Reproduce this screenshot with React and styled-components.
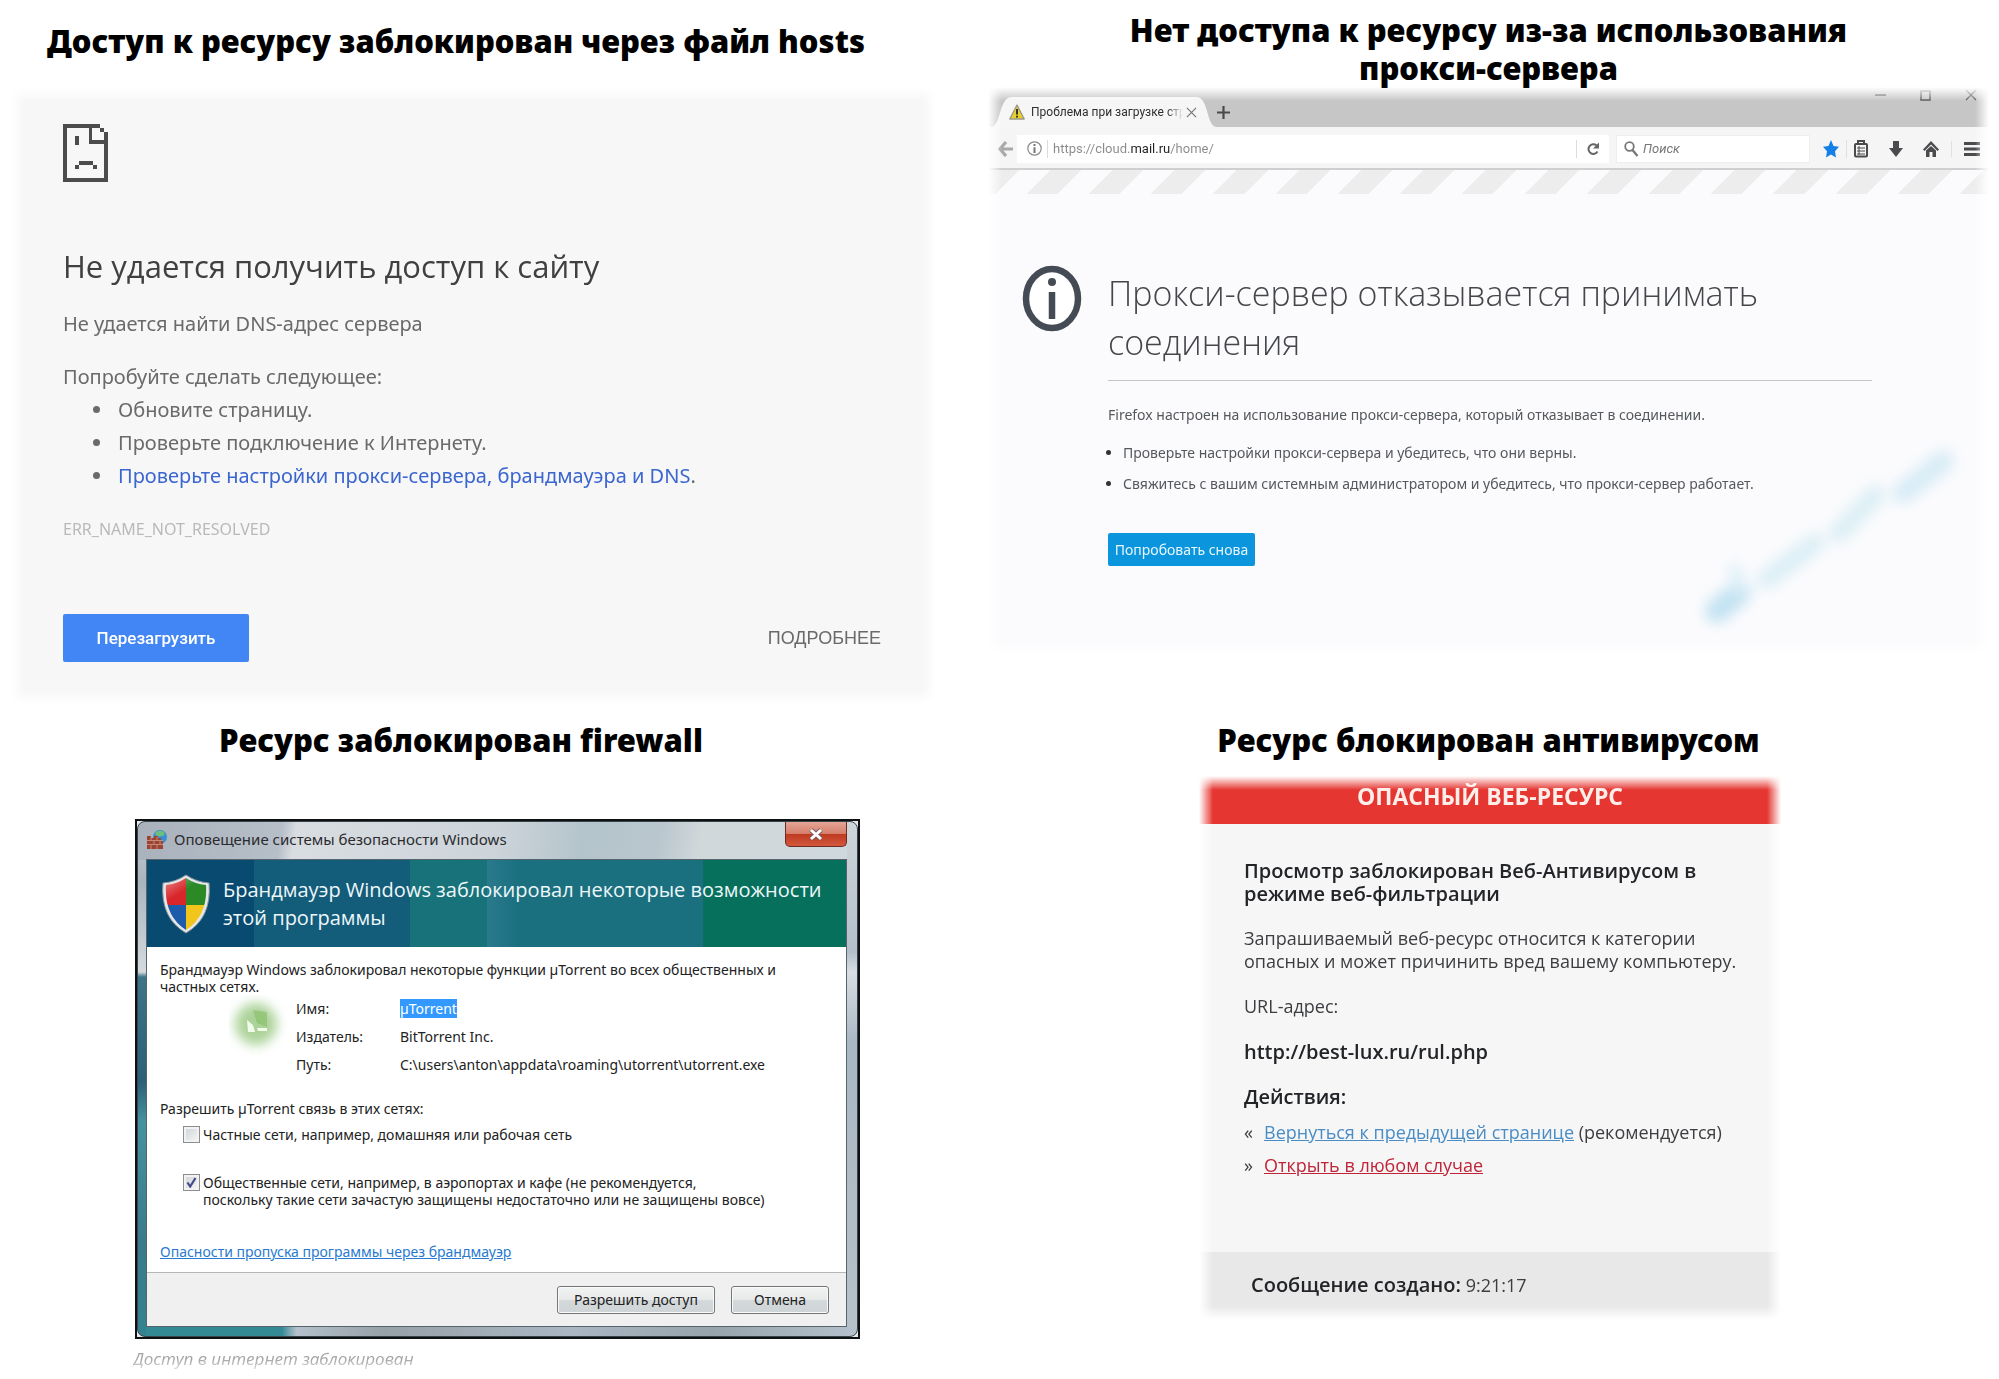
import React from 'react';
import styled, { createGlobalStyle, css } from 'styled-components';

const GlobalStyle = createGlobalStyle`
  *, *::before, *::after {
    box-sizing: border-box;
  }

  body {
    background: #fff;
    font-family: "Noto Sans", "Open Sans", sans-serif;
    margin: 0;
  }

  h1, h2, h3, p, ul, dl, dd {
    margin: 0;
    padding: 0;
  }
`;

// soft edges shared by the pasted-in cards
const feather = css`
  mask-image:
    linear-gradient(to right, transparent, #000 14px, #000 calc(100% - 14px), transparent),
    linear-gradient(to bottom, transparent, #000 14px, #000 calc(100% - 14px), transparent);
  mask-composite: intersect;
`;

const Board = styled.main`
  display: grid;
  grid-template-columns: minmax(0, 926fr) minmax(0, 1001fr);
  column-gap: 52px;
  row-gap: 17px;
  align-items: start;
  padding: 0 10px;
`;

const Heading = styled.h2`
  color: #000;
  font-size: 31px;
  font-weight: 900;
  line-height: 38px;
  padding: ${(props) => props.$pad};
  text-align: center;
`;

/* Chrome error page */

const ChromePage = styled.div`
  ${feather}
  background: #f7f7f8;
  color: #6a6a6a;
  font-size: 20px;
  line-height: 33px;
  padding: 37px 55px 42px 53px;

  svg {
    display: block;
  }
`;

const ChromeTitle = styled.h3`
  color: #404040;
  font-family: "Open Sans", sans-serif;
  font-size: 31px;
  font-weight: 400;
  line-height: 42px;
  margin: 63px 0 20px;
`;

const Tips = styled.ul`
  padding-left: 51px;

  li {
    padding-left: 4px;
  }

  a {
    color: #3b66cf;
    text-decoration: none;
  }
`;

const Suggest = styled.p`
  margin-top: 20px;
`;

const ErrorCode = styled.div`
  color: #b9b9b9;
  font-size: 16px;
  line-height: 24px;
  margin: 25px 0 73px;
`;

const ChromeActions = styled.div`
  align-items: center;
  display: flex;
  justify-content: space-between;
`;

const ReloadButton = styled.button`
  background: #4285f4;
  border: 0;
  border-radius: 2px;
  color: #fff;
  font: 500 17px/48px Roboto, sans-serif;
  padding: 0;
  width: 186px;
`;

const DetailsButton = styled.button`
  background: none;
  border: 0;
  color: #6a6a6a;
  font: 18px/24px "Liberation Sans", sans-serif;
  padding: 0;
`;

/* Firefox window */

const FirefoxWindow = styled.div`
  ${feather}
  background: #fbfbfd;
  color: #55585c;
  font-size: 14px;
  position: relative;
`;

const TabStrip = styled.div`
  background: #c6c6c6;
  display: flex;
  height: 40px;
  padding-left: 4px;
`;

const Tab = styled.div`
  align-items: center;
  align-self: flex-end;
  background: #f6f6f6;
  clip-path: path("M0 30 C9 28 7 0 20 0 H204 C217 0 214 28 224 30 Z");
  color: #2f2f2f;
  display: flex;
  font: 12px/30px Roboto, sans-serif;
  height: 30px;
  padding-left: 17px;
  width: 224px;
`;

const TabLabel = styled.span`
  flex: none;
  mask-image: linear-gradient(to right, #000 136px, transparent 152px);
  margin: 0 0 0 6px;
  white-space: nowrap;
`;

const BareButton = styled.button`
  align-items: center;
  background: none;
  border: 0;
  color: inherit;
  display: flex;
  flex: none;
  justify-content: center;
  padding: 0;
`;

const CloseTab = styled(BareButton)`
  color: #777;
`;

const NewTab = styled(BareButton)`
  align-self: flex-end;
  color: #4a4a4a;
  height: 30px;
  width: 14px;
`;

const WindowControls = styled.div`
  color: #555;
  display: flex;
  gap: 34px;
  height: 16px;
  margin-left: auto;
  padding-right: 12px;
`;

const Toolbar = styled.div`
  align-items: center;
  background: #f5f5f6;
  border-bottom: 2px solid #cfcfd0;
  display: flex;
  height: 43px;
  padding: 2px 0 0 10px;
`;

const Field = styled.label`
  align-items: center;
  background: #fff;
  display: flex;
  height: 28px;
`;

const UrlField = styled(Field)`
  flex: 1;
  margin: 0 7px 0 3px;
  padding-left: 10px;
`;

const SearchField = styled(Field)`
  border: 1px solid #eee;
  flex: none;
  gap: 4px;
  padding-left: 7px;
  width: 194px;
`;

const Divider = styled.span`
  background: #dcdcdc;
  height: 18px;
  margin-left: ${(props) => props.$gap}px;
  width: 1px;
`;

const UrlInput = styled.input`
  background: linear-gradient(to right, #8a8a8a 82px, #222 82px, #222 122px, #8a8a8a 122px);
  background-clip: text;
  border: 0;
  color: transparent;
  flex: 1;
  font: 13px/20px Roboto, sans-serif;
  min-width: 0;
  outline: 0;
  padding: 0 0 0 5px;
`;

const SearchInput = styled.input`
  background: none;
  border: 0;
  flex: 1;
  font: italic 13px/20px Roboto, sans-serif;
  min-width: 0;
  outline: 0;
  padding: 0;

  &::placeholder {
    color: #777;
  }
`;

const ReloadIcon = styled(BareButton)`
  color: #666;
  width: 32px;
`;

const Tools = styled.div`
  border-left: ${(props) => (props.$line ? '1px solid #e0e0e2' : '0')};
  color: #4b4b4d;
  display: flex;
  flex: none;
  gap: 19px;
  padding: ${(props) => props.$pad};
`;

const Stripes = styled.div`
  background: repeating-linear-gradient(
    135deg,
    #ededee 0,
    #ededee 22px,
    #fbfbfd 22px,
    #fbfbfd 44px
  );
  height: 24px;
`;

const ProxyPage = styled.div`
  align-items: flex-start;
  display: flex;
  gap: 26px;
  padding: 71px 117px 89px 34px;

  > svg {
    flex: none;
  }
`;

const ProxyText = styled.div`
  flex: 1;
  line-height: 31px;
  padding-top: 4px;

  ul {
    margin: 7px 0 34px;
    padding-left: 15px;
  }

  li::marker {
    color: #333;
  }
`;

const ProxyTitle = styled.h3`
  border-bottom: 1px solid #c4c4c6;
  color: #44464a;
  font-family: "Open Sans", sans-serif;
  font-size: 34px;
  font-weight: 300;
  line-height: 49px;
  margin-bottom: 18px;
  padding-bottom: 13px;
`;

const RetryButton = styled.button`
  background: #0a95dd;
  border: 0;
  border-radius: 2px;
  color: #e8f6ff;
  display: block;
  font: 14px/33px "Noto Sans", sans-serif;
  padding: 0;
  width: 147px;
`;

const Smudge = styled.svg`
  bottom: 12px;
  position: absolute;
  right: 14px;
`;

/* Windows firewall dialog */

const FirewallWindow = styled.div`
  background: #e4e8ea;
  border: 2px solid #0e1112;
  margin-left: 125px;
  max-width: 725px;
`;

const Glass = styled.div`
  background:
    linear-gradient(to bottom, transparent 37px, #a9b5be 60px, #d5dade 150px, #3c7488 155px, #2b6079 260px, #4593a0 300px, #3a7a8c 420px, #338391) left / 8px 100% no-repeat,
    linear-gradient(to right, #338a94 20%, #b4c0cb 22%, #96a1a8 34%, #aab6c2 60%, #98a4ac 80%, #b4c0cb) bottom / 100% 9px no-repeat,
    linear-gradient(to bottom, #cfd6da, #b3bfca 130px, #d8dee2 150px, #a9b7c4 220px, #b6c2c8) right / 10px 100% no-repeat,
    linear-gradient(100deg, #a9b2bc 0, #b6bec8 20%, #d9dde1 22%, #ccd4da 50%, #b4c4cb 62%, #b9c6ce 72%, #d0d8da 78%, #cfd8dc) top / 100% 38px no-repeat,
    #b6bec8;
  border: 1px solid #39434a;
  border-radius: 8px;
  padding: 0 10px 9px 8px;
`;

const TitleBar = styled.div`
  align-items: center;
  color: #2b2b2e;
  display: flex;
  font-size: 15px;
  gap: 6px;
  height: 37px;
  line-height: 20px;
  padding: 0 0 3px 1px;
`;

const CloseButton = styled(BareButton)`
  align-self: flex-start;
  background: linear-gradient(to bottom, #e3a596, #d6806c 48%, #bf3a22 52%, #d2583c);
  border: 1px solid #6b2a22;
  border-radius: 0 0 5px 5px;
  border-top: 0;
  height: 25px;
  margin-left: auto;
  width: 62px;
`;

const DialogBody = styled.div`
  background: #fff;
  border: 1px solid #56646c;
  color: #222;
  font-size: 14px;
  line-height: 17px;
`;

const Banner = styled.div`
  align-items: center;
  background: linear-gradient(
    to right,
    #084a70 107px,
    #135c7a 107px,
    #135c7a 263px,
    #17727a 263px,
    #17727a 340px,
    #2a7a8c 340px,
    #1b7080 370px,
    #1b7080 556px,
    #07705d 556px
  );
  color: #eef7f9;
  display: flex;
  gap: 12px;
  height: 87px;
  padding-left: 14px;

  h3 {
    font: 400 20px/28px "Open Sans", sans-serif;
  }

  svg {
    flex: none;
  }
`;

const DialogContent = styled.div`
  padding: 14px 13px 12px;
`;

const Summary = styled.p`
  max-width: 640px;
`;

const AppInfo = styled.div`
  display: grid;
  grid-template-columns: 67px 1fr;
  padding-left: 69px;

  dl {
    display: grid;
    grid-template-columns: 104px 1fr;
    line-height: 28px;
  }
`;

const Selected = styled.mark`
  background: #3399ff;
  color: #fff;
`;

const Networks = styled.fieldset`
  border: 0;
  margin: 21px 0 35px;
  padding: 0;

  legend {
    padding: 0;
  }
`;

const CheckRow = styled.label`
  display: flex;
  gap: 3px;
  margin: ${(props) => props.$top}px 0 0 23px;
`;

const CheckBox = styled.input`
  appearance: none;
  background: linear-gradient(135deg, #cdd3d6, #f7f7f7);
  border: 1px solid #8b8f92;
  box-shadow: inset 0 0 0 2px #f2f2f2;
  flex: none;
  height: 17px;
  margin: 0;
  width: 17px;

  &:checked {
    background: url("data:image/svg+xml,%3Csvg xmlns='http://www.w3.org/2000/svg' viewBox='0 0 15 15'%3E%3Cpath d='M3.500 7.500 6.200 11.500 11.500 3' fill='none' stroke='%23434a8a' stroke-width='2.200'/%3E%3C/svg%3E") center / 15px no-repeat, linear-gradient(135deg, #cdd3d6, #f7f7f7);
  }
`;

const HelpLink = styled.a`
  color: #2a7ad0;
`;

const DialogFooter = styled.div`
  background: #f0f0f1;
  border-top: 1px solid #b8b5b8;
  display: flex;
  gap: 16px;
  justify-content: flex-end;
  padding: 13px 17px 12px 0;
`;

const DialogButton = styled.button`
  background: linear-gradient(to bottom, #f1f2f2, #e8eaea 48%, #d3d9da 52%, #cfd4d6);
  border: 1px solid #74787a;
  border-radius: 3px;
  box-shadow: inset 0 0 0 1px #fafafa;
  color: #222;
  font: 14px/26px "Noto Sans", sans-serif;
  padding: 0;
  width: ${(props) => (props.$wide ? 158 : 98)}px;
`;

const Caption = styled.p`
  color: #a4a4a4;
  font: italic 17px/24px "Open Sans", sans-serif;
  margin: 8px 0 0 123px;
  mask-image: linear-gradient(to bottom, #000 12px, rgba(0, 0, 0, 0.3));
`;

/* Antivirus warning */

const VirusCard = styled.div`
  ${feather}
  background: #f6f6f6;
  color: #3c3d40;
  font: 18px/23px "Open Sans", sans-serif;
  margin-left: 211px;
  max-width: 582px;
`;

const VirusHeader = styled.h3`
  background: #e53631;
  color: #fdeeea;
  font: 700 23px/30px "Open Sans", sans-serif;
  height: 48px;
  padding: 5px 0 0;
  text-align: center;
`;

const VirusBody = styled.div`
  display: flex;
  flex-direction: column;
  gap: 22px;
  padding: 35px 36px 70px 45px;
`;

const Strong = styled.strong`
  color: #222428;
  font-size: 20px;
  font-weight: 600;
`;

const Actions = styled.div`
  line-height: 33px;

  ${Strong} {
    display: block;
    line-height: 23px;
    margin-bottom: 8px;
  }
`;

const Action = styled.div`
  display: grid;
  grid-template-columns: 20px 1fr;
  white-space: nowrap;
`;

const ActionLink = styled.a`
  color: ${(props) => (props.$danger ? '#bf2438' : '#4a8cc4')};
`;

const VirusFooter = styled.div`
  background: #e8e8e8;
  height: 68px;
  padding: 21px 52px 0;
`;

const SadPage = () => (
  <svg width="45" height="58" viewBox="0 0 45 58" fill="#4c4c4c" aria-hidden="true">
    <path d="M0 0H37V4H41V8H45V58H0ZM4 4V54H41V20H26V4ZM29 4V16H41V8H37V4Z" fillRule="evenodd" />
    <path d="M12 12H16V21H12ZM16 37H30V41H16ZM12 41H16V45H12ZM30 41H34V45H30Z" />
  </svg>
);

const Warning = () => (
  <svg width="16" height="16" viewBox="0 0 16 16" aria-hidden="true">
    <path d="M8 1 15.200 15H.8Z" fill="#e8cf2a" stroke="#9a9a8a" strokeWidth="1.400" strokeLinejoin="round" />
    <path d="M8 5V10.500M8 11.800V13.500" stroke="#333" strokeWidth="2" />
  </svg>
);

const Cross = ({ size }) => (
  <svg width={size} height={size} viewBox="0 0 12 12" aria-hidden="true">
    <path d="M1 1 11 11M11 1 1 11" stroke="currentColor" strokeWidth="1.300" />
  </svg>
);

const InfoCircle = () => (
  <svg width="60" height="67" viewBox="0 0 60 67" aria-hidden="true">
    <ellipse cx="30" cy="33.500" rx="26" ry="29.500" fill="#fff" stroke="#444b54" strokeWidth="6.500" />
    <circle cx="30" cy="17" r="4" fill="#444b54" />
    <path d="M30 27V54" stroke="#444b54" strokeWidth="6.500" />
  </svg>
);

const FirewallIcon = () => (
  <svg width="21" height="21" viewBox="0 0 21 21" aria-hidden="true">
    <circle cx="13" cy="8" r="7" fill="#3a8fd0" />
    <path d="M8 4Q12 0 17 3 19 7 14 7 10 9 8 4Z" fill="#6cc07a" />
    <path d="M0 7H4V9H7V7H11V9H14V12H16V20H0Z" fill="#9c4434" />
    <path d="M0 11.500H16M0 15.500H16M4 8V11M10 8V11M7 12V15M13 12V15M4 16V20M10 16V20" stroke="#d09a8a" strokeWidth=".8" />
  </svg>
);

const Shield = () => (
  <svg width="50" height="60" viewBox="0 0 50 60" aria-hidden="true">
    <defs>
      <clipPath id="shield">
        <path d="M25 4Q34 10 45 11 47 42 25 56 3 42 5 11 16 10 25 4Z" />
      </clipPath>
      <linearGradient id="gloss" x1="0" y1="0" x2="1" y2="1">
        <stop offset="0" stopColor="#fff" stopOpacity=".55" />
        <stop offset=".5" stopColor="#fff" stopOpacity="0" />
      </linearGradient>
    </defs>
    <path d="M25 1Q35 8 48 9 51 44 25 59-1 44 2 9 15 8 25 1Z" fill="#e4e8ea" stroke="#8e979c" />
    <g clipPath="url(#shield)">
      <path d="M0 0H25V31H0Z" fill="#d8262a" />
      <path d="M25 0H50V31H25Z" fill="#2b8a26" />
      <path d="M0 31H25V60H0Z" fill="#1d5cab" />
      <path d="M25 31H50V60H25Z" fill="#f2c51d" />
      <path d="M0 0H50V31H0Z" fill="url(#gloss)" />
    </g>
  </svg>
);

const AppBlob = () => (
  <svg width="64" height="64" viewBox="0 0 64 64" aria-hidden="true">
    <defs>
      <filter id="soft" x="-40%" y="-40%" width="180%" height="180%">
        <feGaussianBlur stdDeviation="6" />
      </filter>
    </defs>
    <ellipse cx="27" cy="29" rx="21" ry="21" fill="#abd298" filter="url(#soft)" />
    <path d="M24 15 38 17 38 32 28 28Z" fill="#7dba5c" opacity=".5" />
    <path d="M18 25 24 30 26 37H19ZM28 33 38 33V36H29Z" fill="#f2faec" />
  </svg>
);

const ErrorHosts = () => (
  <section>
    <Heading $pad="22px 34px 27px 0">Доступ к ресурсу заблокирован через файл hosts</Heading>
    <ChromePage>
      <SadPage />
      <ChromeTitle>Не удается получить доступ к сайту</ChromeTitle>
      <p>Не удается найти DNS-адрес сервера</p>
      <Suggest>Попробуйте сделать следующее:</Suggest>
      <Tips>
        <li>Обновите страницу.</li>
        <li>Проверьте подключение к Интернету.</li>
        <li>
          <a href="#dns">Проверьте настройки прокси-сервера, брандмауэра и DNS</a>
          .
        </li>
      </Tips>
      <ErrorCode>ERR_NAME_NOT_RESOLVED</ErrorCode>
      <ChromeActions>
        <ReloadButton>Перезагрузить</ReloadButton>
        <DetailsButton>ПОДРОБНЕЕ</DetailsButton>
      </ChromeActions>
    </ChromePage>
  </section>
);

const ErrorProxy = () => (
  <section>
    <Heading $pad="11px 120px 0">Нет доступа к ресурсу из-за использования прокси-сервера</Heading>
    <FirefoxWindow>
      <TabStrip>
        <Tab>
          <Warning />
          <TabLabel>Проблема при загрузке стр</TabLabel>
          <CloseTab aria-label="Закрыть вкладку"><Cross size={11} /></CloseTab>
        </Tab>
        <NewTab aria-label="Новая вкладка">
          <svg width="13" height="13" viewBox="0 0 13 13">
            <path d="M6.500 0V13M0 6.500H13" stroke="currentColor" strokeWidth="2.200" />
          </svg>
        </NewTab>
        <WindowControls>
          <BareButton aria-label="Свернуть">
            <svg width="11" height="11" viewBox="0 0 11 11"><path d="M0 5H11" stroke="currentColor" strokeWidth="1.500" /></svg>
          </BareButton>
          <BareButton aria-label="Развернуть">
            <svg width="11" height="11" viewBox="0 0 11 11"><path d="M1 1H10V10H1Z" fill="none" stroke="currentColor" strokeWidth="1.500" /></svg>
          </BareButton>
          <BareButton aria-label="Закрыть"><Cross size={12} /></BareButton>
        </WindowControls>
      </TabStrip>
      <Toolbar>
        <BareButton aria-label="Назад">
          <svg width="16" height="16" viewBox="0 0 16 16"><path d="M8 1 2 8 8 15M2.500 8H15" fill="none" stroke="#a9a9a9" strokeWidth="3.200" /></svg>
        </BareButton>
        <UrlField>
          <svg width="15" height="15" viewBox="0 0 15 15" aria-hidden="true">
            <circle cx="7.500" cy="7.500" r="6.700" fill="none" stroke="#8a8a8a" strokeWidth="1.200" />
            <path d="M7.500 3V5M7.500 6.300V12" stroke="#777" strokeWidth="2" />
          </svg>
          <Divider $gap={5} />
          <UrlInput aria-label="Адрес" defaultValue="https://cloud.mail.ru/home/" />
          <Divider $gap={0} />
          <ReloadIcon aria-label="Обновить">
            <svg width="13" height="14" viewBox="0 0 13 14">
              <path d="M10.500 9.500A4.800 4.800 0 1 1 9.500 3.500" fill="none" stroke="currentColor" strokeWidth="2" />
              <path d="M12 .5V6.500H6Z" fill="currentColor" />
            </svg>
          </ReloadIcon>
        </UrlField>
        <SearchField>
          <svg width="15" height="16" viewBox="0 0 15 16" aria-hidden="true">
            <circle cx="5.500" cy="5.500" r="4.300" fill="none" stroke="#777" strokeWidth="1.800" />
            <path d="M8.500 9 13.500 15" stroke="#777" strokeWidth="2.300" />
          </svg>
          <SearchInput aria-label="Поиск" placeholder="Поиск" />
        </SearchField>
        <Tools $pad="0 7px 0 13px">
          <BareButton aria-label="Закладка">
            <svg width="16" height="18" viewBox="0 0 16 18"><path d="M8 0 10.500 6 16 6.800 12 11.200 13 17.500 8 14.500 3 17.500 4 11.200 0 6.800 5.500 6Z" fill="#157fe8" /></svg>
          </BareButton>
        </Tools>
        <Tools $line $pad="0 12px 0 6px">
          <BareButton aria-label="Список">
            <svg width="16" height="18" viewBox="0 0 16 18">
              <path d="M5 3V1H11V3" fill="none" stroke="currentColor" strokeWidth="2" />
              <rect x="2" y="4" width="12" height="12.500" rx="1" fill="none" stroke="currentColor" strokeWidth="2" />
              <path d="M4 8H12M4 11H12M4 14H12M6 6V15" stroke="currentColor" strokeWidth="1" />
            </svg>
          </BareButton>
          <BareButton aria-label="Загрузки">
            <svg width="16" height="18" viewBox="0 0 16 18"><path d="M5 1H11V8H15L8 17 1 8H5Z" fill="currentColor" /></svg>
          </BareButton>
          <BareButton aria-label="Домой">
            <svg width="16" height="18" viewBox="0 0 16 18">
              <path d="M8 1 16 9.500 14.500 11 8 4.500 1.500 11 0 9.500Z" fill="currentColor" />
              <path d="M3 10.500 8 6 13 10.500V17H9.500V12H6.500V17H3Z" fill="currentColor" />
            </svg>
          </BareButton>
        </Tools>
        <Tools $line $pad="0 9px 0 12px">
          <BareButton aria-label="Меню">
            <svg width="16" height="16" viewBox="0 0 16 16"><path d="M0 2.500H16M0 8H16M0 13.500H16" stroke="currentColor" strokeWidth="3" /></svg>
          </BareButton>
        </Tools>
      </Toolbar>
      <Stripes />
      <ProxyPage>
        <InfoCircle />
        <ProxyText>
          <ProxyTitle>Прокси-сервер отказывается принимать соединения</ProxyTitle>
          <p>Firefox настроен на использование прокси-сервера, который отказывает в соединении.</p>
          <ul>
            <li>Проверьте настройки прокси-сервера и убедитесь, что они верны.</li>
            <li>Свяжитесь с вашим системным администратором и убедитесь, что прокси-сервер работает.</li>
          </ul>
          <RetryButton>Попробовать снова</RetryButton>
        </ProxyText>
      </ProxyPage>
      <Smudge width="290" height="210" viewBox="0 0 290 210" aria-hidden="true">
        <defs>
          <filter id="smudge" x="-20%" y="-20%" width="140%" height="140%">
            <feGaussianBlur stdDeviation="7" />
          </filter>
        </defs>
        <g fill="none" strokeLinecap="round" filter="url(#smudge)">
          <path d="M32 178 54 160" stroke="#c2e2f2" strokeWidth="24" />
          <path d="M50 136 54 156" stroke="#dceff8" strokeWidth="12" />
          <path d="M82 146 130 110" stroke="#dceff6" strokeWidth="20" />
          <path d="M154 100 190 62" stroke="#dceff5" strokeWidth="20" />
          <path d="M218 60 258 28" stroke="#d8ecf6" strokeWidth="22" />
        </g>
      </Smudge>
    </FirefoxWindow>
  </section>
);

const ErrorFirewall = () => (
  <section>
    <Heading $pad="0 24px 60px 0">Ресурс заблокирован firewall</Heading>
    <FirewallWindow>
      <Glass>
        <TitleBar>
          <FirewallIcon />
          Оповещение системы безопасности Windows
          <CloseButton aria-label="Закрыть">
            <svg width="16" height="13" viewBox="0 0 16 13">
              <path d="M3 2 13 11M13 2 3 11" stroke="#7a5a58" strokeWidth="5" />
              <path d="M3 2 13 11M13 2 3 11" stroke="#fff" strokeWidth="3" />
            </svg>
          </CloseButton>
        </TitleBar>
        <DialogBody>
          <Banner>
            <Shield />
            <h3>Брандмауэр Windows заблокировал некоторые возможности этой программы</h3>
          </Banner>
          <DialogContent>
            <Summary>
              Брандмауэр Windows заблокировал некоторые функции µTorrent во всех общественных и
              частных сетях.
            </Summary>
            <AppInfo>
              <AppBlob />
              <dl>
                <dt>Имя:</dt>
                <dd><Selected>µTorrent</Selected></dd>
                <dt>Издатель:</dt>
                <dd>BitTorrent Inc.</dd>
                <dt>Путь:</dt>
                <dd>C:\users\anton\appdata\roaming\utorrent\utorrent.exe</dd>
              </dl>
            </AppInfo>
            <Networks>
              <legend>Разрешить µTorrent связь в этих сетях:</legend>
              <CheckRow $top={9}>
                <CheckBox type="checkbox" />
                Частные сети, например, домашняя или рабочая сеть
              </CheckRow>
              <CheckRow $top={31}>
                <CheckBox type="checkbox" defaultChecked />
                <span>
                  Общественные сети, например, в аэропортах и кафе (не рекомендуется,
                  <br />
                  поскольку такие сети зачастую защищены недостаточно или не защищены вовсе)
                </span>
              </CheckRow>
            </Networks>
            <HelpLink href="#risks">Опасности пропуска программы через брандмауэр</HelpLink>
          </DialogContent>
          <DialogFooter>
            <DialogButton $wide>Разрешить доступ</DialogButton>
            <DialogButton>Отмена</DialogButton>
          </DialogFooter>
        </DialogBody>
      </Glass>
    </FirewallWindow>
    <Caption>Доступ в интернет заблокирован</Caption>
  </section>
);

const ErrorAntivirus = () => (
  <section>
    <Heading $pad="0 0 17px">Ресурс блокирован антивирусом</Heading>
    <VirusCard>
      <VirusHeader>ОПАСНЫЙ ВЕБ-РЕСУРС</VirusHeader>
      <VirusBody>
        <Strong>Просмотр заблокирован Веб-Антивирусом в режиме веб-фильтрации</Strong>
        <p>Запрашиваемый веб-ресурс относится к категории опасных и может причинить вред вашему компьютеру.</p>
        <p>URL-адрес:</p>
        <Strong>http://best-lux.ru/rul.php</Strong>
        <Actions>
          <Strong>Действия:</Strong>
          <Action>
            «
            <span>
              <ActionLink href="#back">Вернуться к предыдущей странице</ActionLink>
              {' '}
              (рекомендуется)
            </span>
          </Action>
          <Action>
            »
            <span>
              <ActionLink href="#open" $danger>Открыть в любом случае</ActionLink>
            </span>
          </Action>
        </Actions>
      </VirusBody>
      <VirusFooter>
        <Strong>Сообщение создано:</Strong>
        {' '}
        9:21:17
      </VirusFooter>
    </VirusCard>
  </section>
);

const App = function () {
  return (
    <>
      <GlobalStyle />
      <Board>
        <ErrorHosts />
        <ErrorProxy />
        <ErrorFirewall />
        <ErrorAntivirus />
      </Board>
    </>
  );
};

export default App;
